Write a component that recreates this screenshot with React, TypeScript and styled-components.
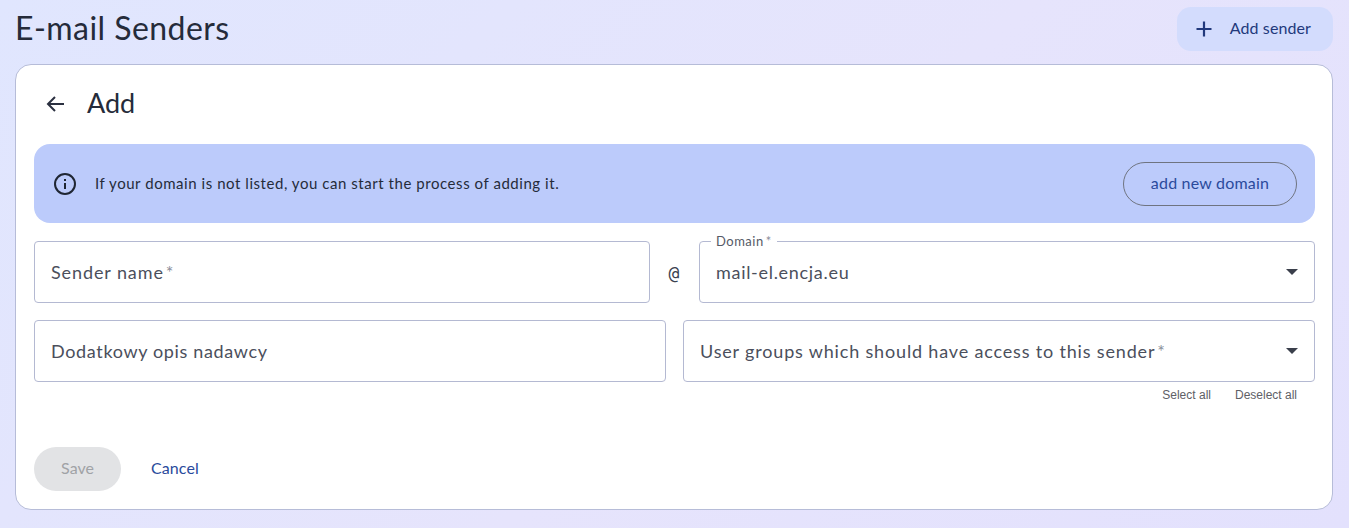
import React from 'react';
import styled, { createGlobalStyle } from 'styled-components';

const GlobalStyle = createGlobalStyle`
  html, body {
    margin: 0;
    height: 100%;
  }
  body {
    font-family: "Lato", "Noto Sans", sans-serif;
    overflow: hidden;
  }
  * {
    box-sizing: border-box;
  }
`;

const PageWrapper = styled.div`
  width: 1349px;
  height: 528px;
  padding: 7px 16px 18px 15px;
  display: flex;
  flex-direction: column;
  background: linear-gradient(135deg, #e0e6fe 0%, #e6e4fc 55%, #e3e1fd 100%);
`;

const Header = styled.header`
  height: 44px;
  margin-bottom: 13px;
  display: flex;
  justify-content: space-between;
  align-items: center;
`;

const Title = styled.h1`
  margin: 0 0 4px 0;
  font-size: 32px;
  font-weight: 400;
  color: #252b3a;
  letter-spacing: 0.45px;
`;

const AddButton = styled.button`
  width: 156px;
  height: 44px;
  padding: 0 22px 3px 18px;
  display: flex;
  align-items: center;
  justify-content: space-between;
  border: none;
  border-radius: 14px;
  background-color: #d3dcfd;
  color: #22397c;
  font-family: inherit;
  font-size: 16px;
  letter-spacing: 0.1px;

  svg {
    margin-top: 3px;
  }
`;

const Card = styled.main`
  flex: 1;
  padding: 18px 17px 18px 18px;
  display: flex;
  flex-direction: column;
  background-color: #fff;
  border: 1px solid #b6bcd8;
  border-radius: 16px;
`;

const CardTop = styled.div`
  height: 42px;
  margin-bottom: 19px;
  padding-left: 9px;
  display: flex;
  align-items: center;
  gap: 20px;
`;

const CardTitle = styled.h2`
  margin: 0 0 3px 0;
  font-size: 27px;
  font-weight: 400;
  color: #252b3a;
`;

const Alert = styled.div`
  height: 79px;
  margin-bottom: 18px;
  padding: 0 18px 0 19px;
  display: flex;
  align-items: center;
  background-color: #bccbfb;
  border-radius: 16px;
  color: #252b3a;
`;

const AlertText = styled.span`
  flex: 1;
  margin: 0 0 2px 18px;
  font-size: 15px;
  letter-spacing: 0.55px;
`;

const OutlineButton = styled.button`
  width: 174px;
  height: 44px;
  padding-bottom: 3px;
  border: 1px solid #6f7480;
  border-radius: 22px;
  background: transparent;
  color: #2a4a9c;
  font-family: inherit;
  font-size: 16px;
  letter-spacing: 0.2px;
`;

const Row = styled.div`
  height: 62px;
  margin-bottom: 17px;
  display: flex;
  align-items: center;
`;

const Field = styled.div<{ $width: number }>`
  position: relative;
  width: ${(p) => p.$width}px;
  height: 62px;
  padding: 0 17px 0 16px;
  display: flex;
  align-items: center;
  justify-content: space-between;
  border: 1px solid #b4b9d2;
  border-radius: 4px;
  font-size: 18px;
  color: #4b4f5c;
`;

const FieldText = styled.span<{ $tracking: number }>`
  letter-spacing: ${(p) => p.$tracking}px;
`;

const Asterisk = styled.span`
  margin-left: 2px;
  color: #8a8e9a;
`;

const FloatLabel = styled.span`
  position: absolute;
  top: -8px;
  left: 11px;
  padding: 0 5px;
  background-color: #fff;
  font-size: 13px;
  line-height: 15px;
  letter-spacing: 0.5px;
  color: #555a66;
`;

const AtSign = styled.div`
  width: 49px;
  padding-right: 1px;
  display: flex;
  justify-content: center;
  font-family: "DejaVu Sans Mono", monospace;
  font-size: 18px;
  color: #3c4250;
`;

const Caret = styled.span`
  width: 0;
  height: 0;
  margin-right: -1px;
  border-left: 6px solid transparent;
  border-right: 6px solid transparent;
  border-top: 6px solid #3a3f4b;
`;

const Gap = styled.div`
  width: 17px;
`;

const GroupLinks = styled.div`
  margin-top: -11px;
  padding-right: 18px;
  display: flex;
  justify-content: flex-end;
  gap: 24px;
  font-family: "Liberation Sans", Arial, sans-serif;
  font-size: 12px;
  line-height: 14px;
  color: #5e6066;
`;

const Footer = styled.div`
  margin-top: 45px;
  display: flex;
  align-items: center;
  gap: 30px;
`;

const SaveButton = styled.button`
  width: 87px;
  height: 44px;
  padding-bottom: 4px;
  border: none;
  border-radius: 22px;
  background-color: #e2e3e5;
  color: #a0a2a6;
  font-family: inherit;
  font-size: 16px;
`;

const CancelLink = styled.a`
  margin-bottom: 3px;
  font-size: 16px;
  letter-spacing: 0.1px;
  color: #2a4a9c;
`;

const BackIcon = () => (
  <svg width="24" height="24" viewBox="0 0 24 24" fill="none" stroke="#2b3040" strokeWidth="2">
    <path d="M21 12H5M12 5l-7 7 7 7" />
  </svg>
);

const PlusIcon = () => (
  <svg width="18" height="18" viewBox="0 0 18 18" fill="none" stroke="#22397c" strokeWidth="2.200">
    <path d="M9 1.500v15M1.500 9h15" />
  </svg>
);

const InfoIcon = () => (
  <svg width="24" height="24" viewBox="0 0 24 24" fill="none" stroke="#1f2633" strokeWidth="2">
    <circle cx="12" cy="12" r="10" />
    <path d="M12 11v6M12 7v2" />
  </svg>
);

export default function App() {
  return (
    <PageWrapper>
      <GlobalStyle />
      <Header>
        <Title>E-mail Senders</Title>
        <AddButton>
          <PlusIcon />
          Add sender
        </AddButton>
      </Header>
      <Card>
        <CardTop>
          <BackIcon />
          <CardTitle>Add</CardTitle>
        </CardTop>
        <Alert>
          <InfoIcon />
          <AlertText>If your domain is not listed, you can start the process of adding it.</AlertText>
          <OutlineButton>add new domain</OutlineButton>
        </Alert>
        <Row>
          <Field $width={616}>
            <FieldText $tracking={0.9}>Sender name<Asterisk>*</Asterisk></FieldText>
          </Field>
          <AtSign>@</AtSign>
          <Field $width={616}>
            <FloatLabel>Domain<Asterisk>*</Asterisk></FloatLabel>
            <FieldText $tracking={0.7}>mail-el.encja.eu</FieldText>
            <Caret />
          </Field>
        </Row>
        <Row>
          <Field $width={632}>
            <FieldText $tracking={0.65}>Dodatkowy opis nadawcy</FieldText>
          </Field>
          <Gap />
          <Field $width={632}>
            <FieldText $tracking={0.83}>User groups which should have access to this sender<Asterisk>*</Asterisk></FieldText>
            <Caret />
          </Field>
        </Row>
        <GroupLinks>
          <span>Select all</span>
          <span>Deselect all</span>
        </GroupLinks>
        <Footer>
          <SaveButton disabled>Save</SaveButton>
          <CancelLink>Cancel</CancelLink>
        </Footer>
      </Card>
    </PageWrapper>
  );
}
